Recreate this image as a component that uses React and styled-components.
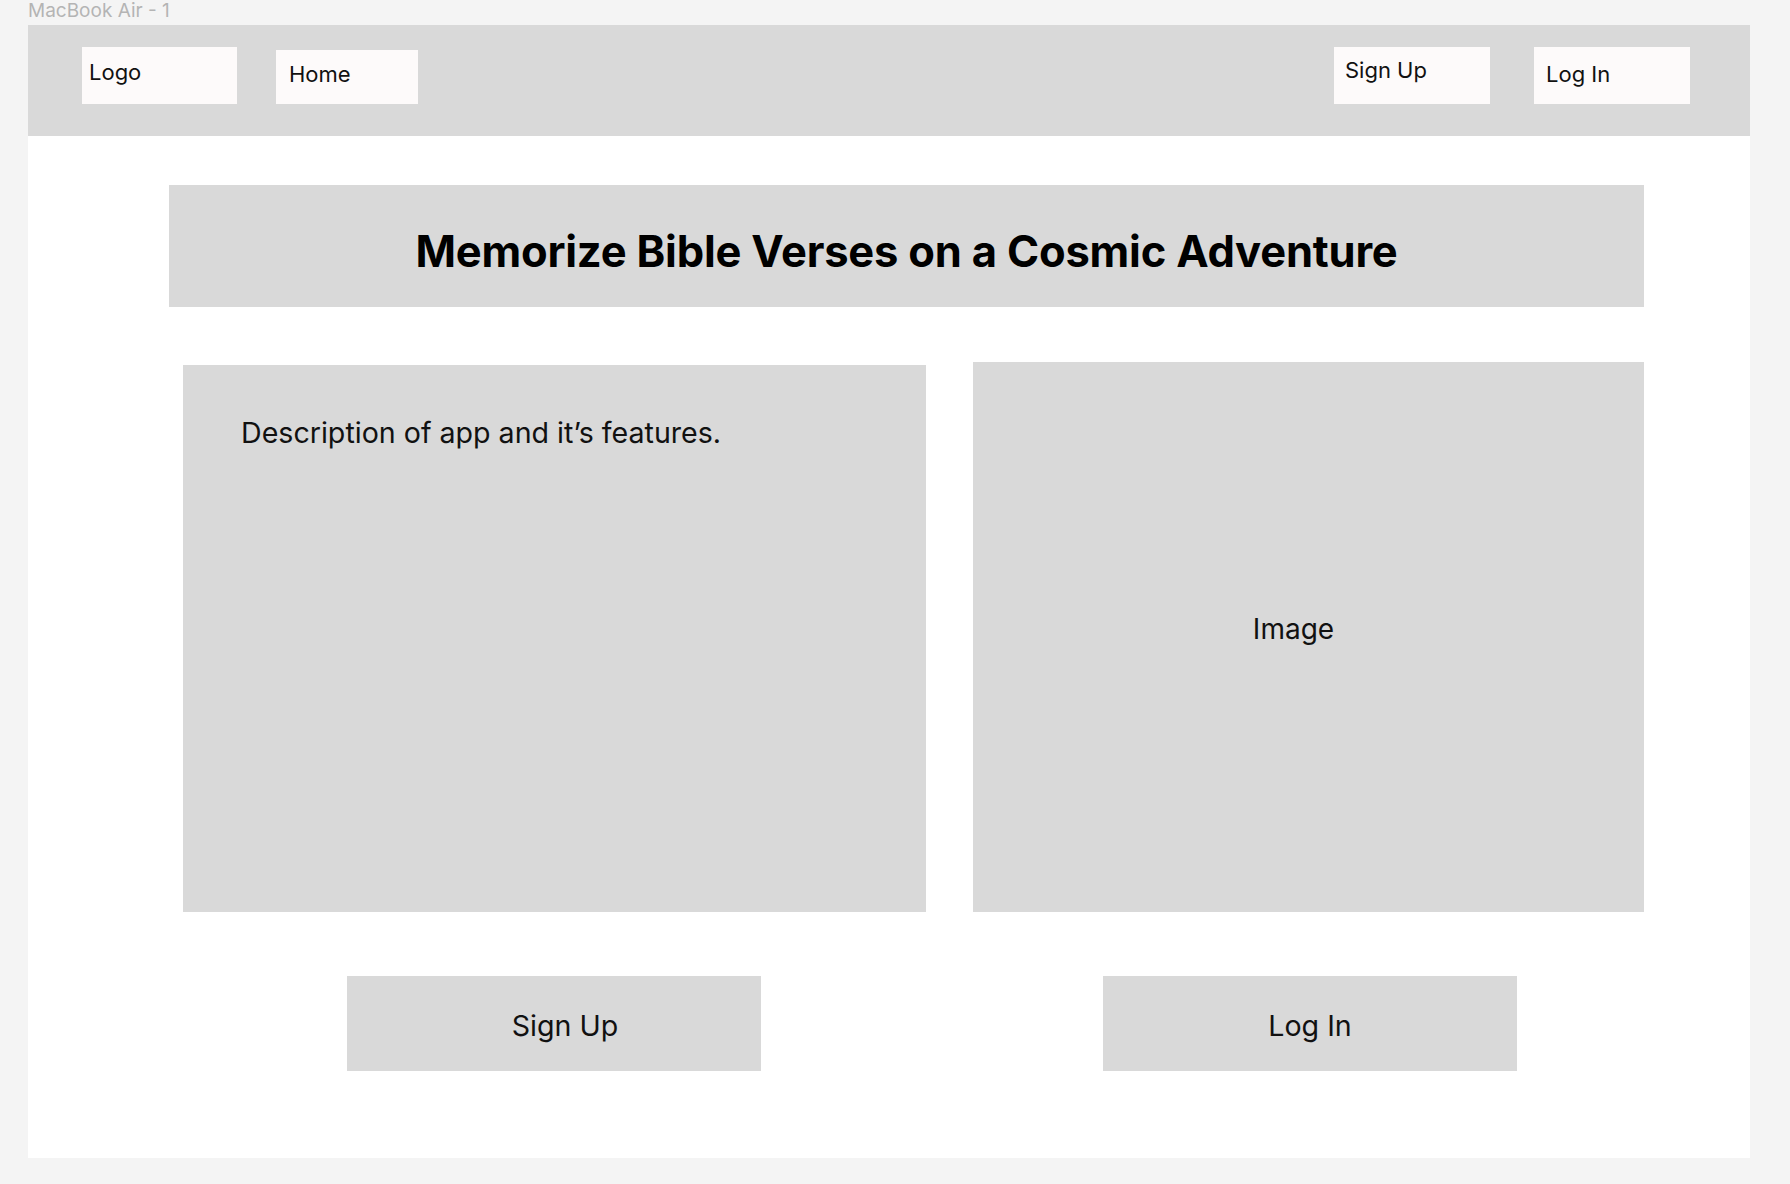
import styled, { createGlobalStyle } from 'styled-components';

const GlobalStyle = createGlobalStyle`
  html, body {
    margin: 0;
    padding: 0;
    background: #f4f4f4;
    font-family: Inter, "Liberation Sans", sans-serif;
    color: #111;
  }
  * { box-sizing: border-box; }
`;

function App() {
  return (
    <Canvas>
      <GlobalStyle />
      <FrameLabel>MacBook Air - 1</FrameLabel>
      <Frame>
        <NavBar>
          <NavGroup>
            <NavBox $w={155} $h={57} $pl={7} $pt={12}>Logo</NavBox>
            <NavBox $w={142} $h={54} $pl={13} $pt={11} $mt={3}>Home</NavBox>
          </NavGroup>
          <NavGroup $gap={44}>
            <NavBox $w={156} $h={57} $pl={11} $pt={10}>Sign Up</NavBox>
            <NavBox $w={156} $h={57} $pl={12} $pt={14}>Log In</NavBox>
          </NavGroup>
        </NavBar>
        <Content>
          <TitleBox>
            <Title>Memorize Bible Verses on a Cosmic Adventure</Title>
          </TitleBox>
          <Panels>
            <DescPanel>Description of app and it’s features.</DescPanel>
            <ImagePanel>Image</ImagePanel>
          </Panels>
          <Actions>
            <ActionButton $shift={22}>Sign Up</ActionButton>
            <ActionButton>Log In</ActionButton>
          </Actions>
        </Content>
      </Frame>
    </Canvas>
  );
}

const Canvas = styled.div`
  width: 1790px;
  height: 1184px;
  background: #f4f4f4;
  padding-left: 28px;
  overflow: hidden;
`;

const FrameLabel = styled.div`
  height: 25px;
  font-size: 19px;
  line-height: 22px;
  color: #b4b4b4;
`;

const Frame = styled.div`
  width: 1722px;
  height: 1133px;
  background: #fff;
  display: flex;
  flex-direction: column;
`;

const NavBar = styled.div`
  height: 111px;
  background: #d9d9d9;
  display: flex;
  align-items: flex-start;
  justify-content: space-between;
  padding: 22px 60px 0 54px;
`;

const NavGroup = styled.div`
  display: flex;
  align-items: flex-start;
  gap: ${p => p.$gap || 39}px;
`;

const NavBox = styled.div`
  width: ${p => p.$w}px;
  height: ${p => p.$h}px;
  margin-top: ${p => p.$mt || 0}px;
  padding: ${p => p.$pt}px 0 0 ${p => p.$pl}px;
  background: #fdfafa;
  font-size: 22px;
  line-height: 26px;
  color: #111;
`;

const Content = styled.div`
  padding: 49px 0 0 141px;
  display: flex;
  flex-direction: column;
`;

const TitleBox = styled.div`
  width: 1475px;
  height: 122px;
  background: #d9d9d9;
  display: flex;
  align-items: center;
  justify-content: center;
  padding-top: 10px;
`;

const Title = styled.h1`
  margin: 0;
  font-size: 43.5px;
  font-weight: 700;
  letter-spacing: -0.2px;
  color: #000;
`;

const Panels = styled.div`
  margin-top: 55px;
  display: flex;
  align-items: flex-end;
  gap: 47px;
  padding-left: 14px;
`;

const DescPanel = styled.div`
  width: 743px;
  height: 547px;
  background: #d9d9d9;
  padding: 50px 0 0 58px;
  font-size: 28.6px;
  line-height: 36px;
`;

const ImagePanel = styled.div`
  width: 671px;
  height: 550px;
  background: #d9d9d9;
  display: flex;
  align-items: center;
  justify-content: center;
  padding: 0 30px 16px 0;
  font-size: 28px;
`;

const Actions = styled.div`
  margin-top: 64px;
  display: flex;
  gap: 342px;
  padding-left: 178px;
`;

const ActionButton = styled.div`
  width: 414px;
  height: 95px;
  background: #d9d9d9;
  display: flex;
  align-items: center;
  justify-content: center;
  padding: 4px 0 0 ${p => p.$shift || 0}px;
  font-size: 28.6px;
  color: #111;
`;

export default App;
